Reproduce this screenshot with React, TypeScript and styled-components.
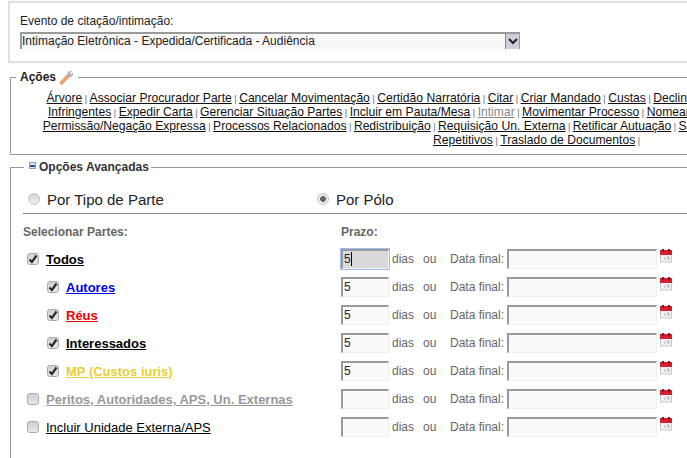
import styled, { createGlobalStyle } from 'styled-components';

const GlobalStyle = createGlobalStyle`
  html, body {
    margin: 0;
    padding: 0;
    background: #fff;
    overflow: hidden;
  }
  body {
    font-family: "Liberation Sans", Arial, sans-serif;
    font-size: 12px;
    color: #000;
  }
`;

const ACTION_LINES = [
  ['Árvore', 'Associar Procurador Parte', 'Cancelar Movimentação', 'Certidão Narratória', 'Citar', 'Criar Mandado', 'Custas', 'Declinar Competência', 'Devolver', 'Reativar', 'Retirar Pauta', 'Embargos'],
  ['Infringentes', 'Expedir Carta', 'Gerenciar Situação Partes', 'Incluir em Pauta/Mesa', 'Intimar', 'Movimentar Processo', 'Nomear Perito', 'Pedido de Vista', 'Retirar de Pauta', 'Anexar', 'Pedido de'],
  ['Permissão/Negação Expressa', 'Processos Relacionados', 'Redistribuição', 'Requisição Un. Externa', 'Retificar Autuação', 'Suspender/Sobrestar Processo', 'Sobrestar Recursos', 'Processos'],
  ['Repetitivos', 'Traslado de Documentos'],
];

const PARTS = [
  { label: 'Todos', color: '#000', bold: true, indent: false, checked: true, days: '5', focused: true },
  { label: 'Autores', color: '#0000ee', bold: true, indent: true, checked: true, days: '5' },
  { label: 'Réus', color: '#ee0000', bold: true, indent: true, checked: true, days: '5' },
  { label: 'Interessados', color: '#000', bold: true, indent: true, checked: true, days: '5' },
  { label: 'MP (Custos iuris)', color: '#e6d035', bold: true, indent: true, checked: true, days: '5' },
  { label: 'Peritos, Autoridades, APS, Un. Externas', color: '#999', bold: true, indent: false, checked: false, days: '' },
  { label: 'Incluir Unidade Externa/APS', color: '#000', bold: false, indent: false, checked: false, days: '' },
];

const CalendarIcon = () => (
  <CalendarSvg width="12" height="14" viewBox="0 0 12 14">
    <rect x="0.5" y="2" width="11" height="11" fill="#f2f2f2" stroke="#c8c8c8" />
    <rect x="0" y="1" width="12" height="5" fill="#d01f2e" />
    <rect x="2" y="0" width="2" height="3" fill="#8c1420" />
    <rect x="8" y="0" width="2" height="3" fill="#8c1420" />
    <path d="M5 8v3M7 8h2v3M7 9.5h2" stroke="#b5b5b5" fill="none" />
  </CalendarSvg>
);

const App = () => {
  return (
    <Page>
      <GlobalStyle />
      <EventBox>
        <EventLabel>Evento de citação/intimação:</EventLabel>
        <SelectBox>
          <SelectText>Intimação Eletrônica - Expedida/Certificada - Audiência</SelectText>
          <SelectArrow>
            <svg width="10" height="7" viewBox="0 0 10 7">
              <path d="M1 1l4 4 4-4" stroke="#222" strokeWidth="2" fill="none" />
            </svg>
          </SelectArrow>
        </SelectBox>
      </EventBox>

      <ActionsFieldset>
        <ActionsLegend>
          Ações
          <svg width="15" height="15" viewBox="0 0 15 15">
            <path d="M2.5 13l6.5-7" stroke="#eda06c" strokeWidth="3.6" strokeLinecap="round" fill="none" />
            <path d="M8.5 7l-.5-3.5L10.5 1H13l-2 2.2 1 1L14 2.5V5.5L11 7.5z" fill="#b4b4b4" />
          </svg>
        </ActionsLegend>
        <ActionsText>
          {ACTION_LINES.map((line, i) => (
            <ActionLine key={i}>
              {line.map((name) => (
                <span key={name}>
                  <ActionLink $muted={name === 'Intimar'}>{name}</ActionLink>
                  <Separator> | </Separator>
                </span>
              ))}
            </ActionLine>
          ))}
        </ActionsText>
      </ActionsFieldset>

      <AdvancedFieldset>
        <AdvancedLegend>
          <MinusBox />
          Opções Avançadas
        </AdvancedLegend>
        <RadioRow>
          <RadioOption $width="289px">
            <Radio />
            Por Tipo de Parte
          </RadioOption>
          <RadioOption>
            <Radio $selected />
            Por Pólo
          </RadioOption>
        </RadioRow>
        <PartsGrid>
          <HeaderCell>Selecionar Partes:</HeaderCell>
          <HeaderCell>Prazo:</HeaderCell>
          {PARTS.map((part) => (
            <PartRow key={part.label}>
              <PartCell $indent={part.indent}>
                <CheckBox>
                  {part.checked && (
                    <svg width="10" height="10" viewBox="0 0 10 10">
                      <path d="M1.5 5.5l2.4 2.6L8.5 1.5" stroke="#2a2a2a" strokeWidth="2.2" fill="none" />
                    </svg>
                  )}
                </CheckBox>
                <PartLabel $color={part.color} $bold={part.bold}>{part.label}</PartLabel>
              </PartCell>
              <DateCell>
                <DaysField $focused={part.focused}>
                  {part.days}
                  {part.focused && <Caret />}
                </DaysField>
                <DiasText>dias</DiasText>
                <OuText>ou</OuText>
                <FinalText>Data final:</FinalText>
                <DateField />
                <CalendarIcon />
              </DateCell>
            </PartRow>
          ))}
        </PartsGrid>
      </AdvancedFieldset>
    </Page>
  );
};

export default App;

const Page = styled.div`
  width: 687px;
  height: 458px;
  overflow: hidden;
  padding: 1px 0 0 8px;
  box-sizing: border-box;
`;

const EventBox = styled.div`
  width: 1060px;
  height: 62px;
  box-sizing: border-box;
  border: 2px solid #e0e0e0;
  padding: 11px 10px 0;
`;

const EventLabel = styled.div`
  font-size: 12px;
  line-height: 14px;
  color: #222;
`;

const SelectBox = styled.div`
  width: 500px;
  height: 17px;
  margin-top: 4px;
  box-sizing: border-box;
  display: flex;
  background: #f8f8f8;
  border-top: 2px solid #9a9a9a;
  border-left: 2px solid #9a9a9a;
`;

const SelectText = styled.div`
  flex: 1;
  font-size: 12px;
  line-height: 14px;
  color: #222;
`;

const SelectArrow = styled.div`
  width: 15px;
  display: flex;
  align-items: center;
  justify-content: center;
  background: #cfccdc;
  border-left: 1px solid #888;
  border-right: 1px solid #999;
  box-sizing: border-box;
`;

const ActionsFieldset = styled.fieldset`
  width: 1060px;
  height: 85px;
  box-sizing: border-box;
  margin: 7px 0 0 2px;
  padding: 0 0 0 4px;
  border: 1px solid #999;
`;

const ActionsLegend = styled.legend`
  display: flex;
  align-items: center;
  gap: 3px;
  margin-left: 1px;
  padding: 0 4px 0 4px;
  height: 14px;
  font-size: 12px;
  font-weight: bold;
  color: #222;
`;

const ActionsText = styled.div`
  text-align: center;
  margin-top: 7px;
  width: 1043px;
`;

const ActionLine = styled.div`
  height: 14px;
  font-size: 12.13px;
  line-height: 14px;
  white-space: nowrap;
`;

const ActionLink = styled.span<{ $muted?: boolean }>`
  color: ${({ $muted }) => ($muted ? '#888' : '#111')};
  text-decoration: underline;
`;

const Separator = styled.span`
  font-size: 9px;
  color: #667;
`;

const AdvancedFieldset = styled.fieldset`
  width: 1060px;
  height: 320px;
  box-sizing: border-box;
  margin: 5px 0 0 2px;
  padding: 0 0 0 12px;
  border: 1px solid #999;
`;

const AdvancedLegend = styled.legend`
  display: flex;
  align-items: center;
  margin-left: 1px;
  padding: 0 2px 0 5px;
  height: 14px;
  font-size: 12px;
  font-weight: bold;
  color: #333;
`;

const MinusBox = styled.span`
  width: 7px;
  height: 7px;
  margin-right: 3px;
  margin-top: -3px;
  box-sizing: border-box;
  border: 1px solid #8c9cc0;
  background: linear-gradient(#dfe6f2 0 2px, #33508f 2px 4px, #dfe6f2 4px);
`;

const RadioRow = styled.div`
  display: flex;
  align-items: center;
  height: 28px;
  margin-top: 11px;
  border-bottom: 1px solid #888;
  padding-left: 5px;
  box-sizing: content-box;
`;

const RadioOption = styled.label<{ $width?: string }>`
  display: flex;
  align-items: center;
  gap: 7px;
  width: ${({ $width }) => $width ?? 'auto'};
  font-size: 15px;
  color: #222;
`;

const Radio = styled.span<{ $selected?: boolean }>`
  width: 12px;
  height: 12px;
  border-radius: 50%;
  box-sizing: border-box;
  border: 1px solid #c4c4c4;
  background: ${({ $selected }) =>
    $selected
      ? 'radial-gradient(circle, #666 0 2.6px, #ececec 3.2px)'
      : 'linear-gradient(#d4d4d4, #efefef)'};
`;

const PartsGrid = styled.div`
  display: grid;
  grid-template-columns: 318px 1fr;
  grid-auto-rows: 28px;
`;

const HeaderCell = styled.div`
  display: flex;
  align-items: center;
  height: 35px;
  margin-bottom: -8px;
  font-size: 12px;
  font-weight: bold;
  color: #666;
`;

const PartRow = styled.div`
  display: contents;
`;

const PartCell = styled.div<{ $indent?: boolean }>`
  display: flex;
  align-items: center;
  gap: 7px;
  padding-left: ${({ $indent }) => ($indent ? '24px' : '4px')};
  padding-top: 7px;
`;

const CheckBox = styled.span`
  width: 12px;
  height: 12px;
  flex: none;
  margin-top: -2px;
  box-sizing: border-box;
  border: 1px solid #aaa;
  border-radius: 3px;
  background: linear-gradient(#cfcfcf, #e8e8e8);
  display: flex;
  align-items: center;
  justify-content: center;
`;

const PartLabel = styled.span<{ $color: string; $bold: boolean }>`
  font-size: 13px;
  font-weight: ${({ $bold }) => ($bold ? 'bold' : 'normal')};
  color: ${({ $color }) => $color};
  text-decoration: underline;
`;

const DateCell = styled.div`
  display: flex;
  align-items: center;
  padding-top: 5px;
  font-size: 12px;
  color: #666;
`;

const DaysField = styled.div<{ $focused?: boolean }>`
  width: 48px;
  height: 20px;
  box-sizing: border-box;
  display: flex;
  align-items: center;
  padding-left: 1px;
  font-size: 12px;
  color: #222;
  background: ${({ $focused }) => ($focused ? '#d9d9d9' : '#fafafa')};
  border-top: 2px solid #9a9a9a;
  border-left: 2px solid #9a9a9a;
  border-right: 1px solid #f0f0f0;
  border-bottom: 1px solid #f0f0f0;
  outline: ${({ $focused }) => ($focused ? '1px solid #9dbcf0' : 'none')};
`;

const Caret = styled.span`
  width: 1px;
  height: 14px;
  background: #000;
`;

const DiasText = styled.span`
  margin-left: 3px;
  width: 31px;
`;

const OuText = styled.span`
  width: 27px;
`;

const FinalText = styled.span`
  width: 57px;
`;

const DateField = styled.div`
  width: 150px;
  height: 20px;
  box-sizing: border-box;
  background: #fafafa;
  border-top: 2px solid #9a9a9a;
  border-left: 2px solid #9a9a9a;
  border-right: 1px solid #f0f0f0;
  border-bottom: 1px solid #f0f0f0;
`;

const CalendarSvg = styled.svg`
  margin-left: 3px;
  margin-top: -5px;
`;
